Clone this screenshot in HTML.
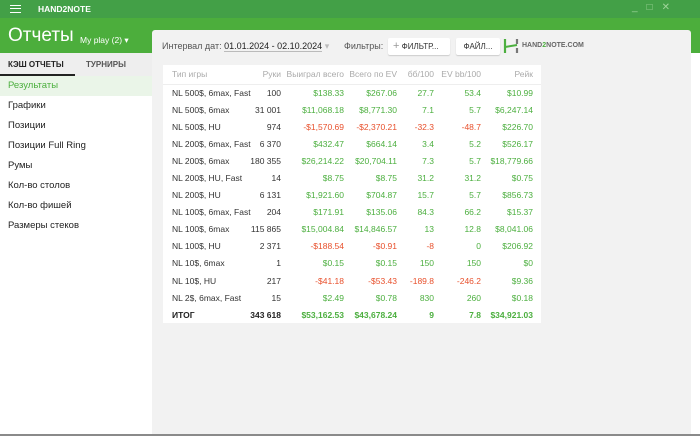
<!DOCTYPE html>
<html><head><meta charset="utf-8"><style>
*{margin:0;padding:0;box-sizing:border-box}
body{width:700px;height:436px;overflow:hidden;background:#fff;font-family:"Liberation Sans","DejaVu Sans",sans-serif;position:relative}
.top{position:absolute;left:0;top:0;width:700px;height:18px;background:#43a047}
.band{position:absolute;left:0;top:18px;width:700px;height:35px;background:#4cae3c}
.panel{position:absolute;left:152px;top:30px;width:539px;height:405px;background:#f2f2f2;border-radius:3px 3px 0 0}
.bottomline{position:absolute;left:0;top:434px;width:700px;height:2px;background:#8a8a8a}
.side{position:absolute;left:0;top:53px;width:152px;height:383px;background:#fff}
.tabs{height:23px;background:#eee;position:relative;font-size:8px;font-weight:bold}
.tabs span{position:absolute;top:7px}
.ul{position:absolute;left:0;bottom:0;width:75px;height:2px;background:#222}
.item{height:20px;line-height:20px;padding-left:8px;font-size:9.5px;color:#222}
.item.act{background:#eaf5e8;color:#4caf3f}
table{position:absolute;left:163px;top:65px;width:378px;background:#fff;border-collapse:collapse;font-size:8.5px;table-layout:fixed}
td{height:17.1px;text-align:right;padding:0;white-space:nowrap;overflow:visible}
td:first-child{text-align:left;padding-left:9px;color:#333}
td:last-child{padding-right:8px}
tr.h td{height:19px;color:#aaa;border-bottom:1px solid #eee}
.g{color:#4caf3f}.r{color:#e8502c}.k{color:#333}
tr.t td{font-weight:bold;color:#222}
tr.t td.g{color:#4caf3f}
</style></head><body>
<div class="top"></div>
<div class="band"></div>
<div style="position:absolute;left:10px;top:5px;width:11px;height:8px;border-top:1.6px solid #fff;border-bottom:1.6px solid #fff"><div style="margin-top:1.6px;height:1.6px;background:#fff"></div></div>
<div style="position:absolute;left:38px;top:4px;color:#fff;font-size:8.5px;font-weight:bold">HAND2NOTE</div>
<div style="position:absolute;left:632px;top:2px;color:#9fd49a;font-size:10px;letter-spacing:9px">_□✕</div>
<div style="position:absolute;left:8px;top:25px;color:#fff;font-size:19px">Отчеты</div>
<div style="position:absolute;left:80px;top:35px;color:#fff;font-size:8.5px">My play (2) ▾</div>
<div class="panel"></div>
<div class="side">
<div class="tabs"><span style="left:8px;color:#222">КЭШ ОТЧЕТЫ</span><span style="left:86px;color:#555">ТУРНИРЫ</span><div class="ul"></div></div>
<div class="item act">Результаты</div><div class="item">Графики</div><div class="item">Позиции</div><div class="item">Позиции Full Ring</div><div class="item">Румы</div><div class="item">Кол-во столов</div><div class="item">Кол-во фишей</div><div class="item">Размеры стеков</div>
</div>
<div style="position:absolute;left:162px;top:41px;font-size:9px;color:#555">Интервал дат: <span style="color:#222;border-bottom:1px solid #bbb">01.01.2024 - 02.10.2024</span> <span style="color:#bbb">▾</span></div>
<div style="position:absolute;left:344px;top:41px;font-size:9px;color:#555">Фильтры:</div>
<div style="position:absolute;left:388px;top:38px;width:62px;height:17px;background:#fff;border-radius:2px;box-shadow:0 1px 1px #ccc;font-size:8px;line-height:17px;padding-left:5px;color:#333"><span style="color:#999;font-size:11px">+</span> ФИЛЬТР...</div>
<div style="position:absolute;left:456px;top:38px;width:44px;height:17px;background:#fff;border-radius:2px;box-shadow:0 1px 1px #ccc;font-size:8px;line-height:17px;text-align:center;color:#333">ФАЙЛ...</div>
<svg style="position:absolute;left:503px;top:38px" width="16" height="16"><path d="M2 1V15" stroke="#4caf3f" stroke-width="2.2"/><path d="M14 1V6M14 10V15" stroke="#777" stroke-width="2.2"/><path d="M2 9L14 7" stroke="#4caf3f" stroke-width="2"/></svg>
<div style="position:absolute;left:522px;top:42px;font-size:7px;font-weight:bold;color:#666">HAND<span style="color:#4caf3f">2</span>NOTE.COM</div>
<table>
<colgroup><col style="width:80px"><col style="width:38px"><col style="width:63px"><col style="width:53px"><col style="width:37px"><col style="width:47px"><col style="width:60px"></colgroup>
<tr class="h"><td>Тип игры</td><td>Руки</td><td>Выиграл всего</td><td>Всего по EV</td><td>бб/100</td><td>EV bb/100</td><td>Рейк</td></tr>
<tr><td>NL 500$, 6max, Fast</td><td class="k">100</td><td class="g">$138.33</td><td class="g">$267.06</td><td class="g">27.7</td><td class="g">53.4</td><td class="g">$10.99</td></tr>
<tr><td>NL 500$, 6max</td><td class="k">31 001</td><td class="g">$11,068.18</td><td class="g">$8,771.30</td><td class="g">7.1</td><td class="g">5.7</td><td class="g">$6,247.14</td></tr>
<tr><td>NL 500$, HU</td><td class="k">974</td><td class="r">-$1,570.69</td><td class="r">-$2,370.21</td><td class="r">-32.3</td><td class="r">-48.7</td><td class="g">$226.70</td></tr>
<tr><td>NL 200$, 6max, Fast</td><td class="k">6 370</td><td class="g">$432.47</td><td class="g">$664.14</td><td class="g">3.4</td><td class="g">5.2</td><td class="g">$526.17</td></tr>
<tr><td>NL 200$, 6max</td><td class="k">180 355</td><td class="g">$26,214.22</td><td class="g">$20,704.11</td><td class="g">7.3</td><td class="g">5.7</td><td class="g">$18,779.66</td></tr>
<tr><td>NL 200$, HU, Fast</td><td class="k">14</td><td class="g">$8.75</td><td class="g">$8.75</td><td class="g">31.2</td><td class="g">31.2</td><td class="g">$0.75</td></tr>
<tr><td>NL 200$, HU</td><td class="k">6 131</td><td class="g">$1,921.60</td><td class="g">$704.87</td><td class="g">15.7</td><td class="g">5.7</td><td class="g">$856.73</td></tr>
<tr><td>NL 100$, 6max, Fast</td><td class="k">204</td><td class="g">$171.91</td><td class="g">$135.06</td><td class="g">84.3</td><td class="g">66.2</td><td class="g">$15.37</td></tr>
<tr><td>NL 100$, 6max</td><td class="k">115 865</td><td class="g">$15,004.84</td><td class="g">$14,846.57</td><td class="g">13</td><td class="g">12.8</td><td class="g">$8,041.06</td></tr>
<tr><td>NL 100$, HU</td><td class="k">2 371</td><td class="r">-$188.54</td><td class="r">-$0.91</td><td class="r">-8</td><td class="g">0</td><td class="g">$206.92</td></tr>
<tr><td>NL 10$, 6max</td><td class="k">1</td><td class="g">$0.15</td><td class="g">$0.15</td><td class="g">150</td><td class="g">150</td><td class="g">$0</td></tr>
<tr><td>NL 10$, HU</td><td class="k">217</td><td class="r">-$41.18</td><td class="r">-$53.43</td><td class="r">-189.8</td><td class="r">-246.2</td><td class="g">$9.36</td></tr>
<tr><td>NL 2$, 6max, Fast</td><td class="k">15</td><td class="g">$2.49</td><td class="g">$0.78</td><td class="g">830</td><td class="g">260</td><td class="g">$0.18</td></tr>
<tr class="t"><td>ИТОГ</td><td>343 618</td><td class="g">$53,162.53</td><td class="g">$43,678.24</td><td class="g">9</td><td class="g">7.8</td><td class="g">$34,921.03</td></tr>
</table>
<div class="bottomline"></div>
</body></html>
